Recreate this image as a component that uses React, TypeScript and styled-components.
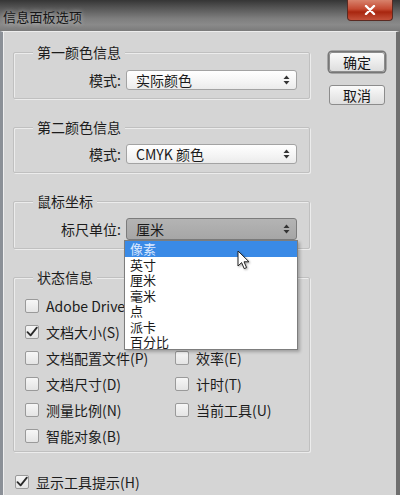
import React from "react";
import styled, { createGlobalStyle, css } from "styled-components";

const Global = createGlobalStyle`
  html, body { margin: 0; padding: 0; background: #d5d5d5; }
  body { font-family: "Noto Sans CJK SC", "Noto Sans", sans-serif; color: #1a1a1a; }
  * { box-sizing: border-box; }
`;

const Window = styled.div`
  width: 400px;
  height: 495px;
  overflow: hidden;
  display: flex;
  flex-direction: column;
  background: #d5d5d5;
`;

const TitleBar = styled.div`
  height: 31px;
  flex: none;
  display: flex;
  align-items: flex-start;
  justify-content: space-between;
  background: linear-gradient(180deg, #353535 0%, #555 25%, #7e7e7e 60%, #8a8a8a 80%, #7a7a7a 100%);
`;

const Title = styled.div`
  font-size: 13px;
  line-height: 14px;
  padding: 10px 0 0 3px;
  color: #161616;
  letter-spacing: 0.2px;
  text-shadow: 0 0 5px rgba(235, 235, 235, 0.7);
`;

const CloseButton = styled.div`
  width: 46px;
  height: 21px;
  margin-right: 7px;
  border: 1px solid #5a2a22;
  border-top: none;
  border-radius: 0 0 4px 4px;
  background: linear-gradient(180deg, #d8826c 0%, #c44a32 45%, #a8260f 60%, #c4513a 100%);
  display: flex;
  align-items: center;
  justify-content: center;
`;

const Body = styled.div`
  flex: 1;
  display: flex;
  flex-direction: column;
  border-left: 3px solid #8b9097;
  border-right: 4px solid #6f6f6f;
  border-top: 1px solid #ededed;
  box-shadow: inset 1px 0 0 #efefef;
  padding: 20px 0 0 10px;
`;

const TopArea = styled.div`
  display: flex;
  gap: 19px;
  align-items: flex-start;
`;

const LeftColumn = styled.div`
  width: 297px;
  display: flex;
  flex-direction: column;
  gap: 28px;
`;

const ButtonColumn = styled.div`
  display: flex;
  flex-direction: column;
  gap: 13px;
`;

const Button = styled.div<{ $default?: boolean }>`
  width: 56px;
  height: 20px;
  border: 1px solid #8c8c8c;
  border-radius: 3px;
  background: linear-gradient(180deg, #fafafa 0%, #ececec 50%, #dedede 100%);
  font-size: 14px;
  line-height: 18px;
  text-align: center;
  color: #161616;
  ${(p) =>
    p.$default &&
    css`
      box-shadow: 0 0 0 1.5px #777;
    `}
`;

const Group = styled.div<{ $pt: number; $pb: number; $raised?: boolean }>`
  position: relative;
  z-index: ${(p) => (p.$raised ? 3 : "auto")};
  border: 1px solid #c0c0c0;
  border-radius: 2px;
  box-shadow: inset 1px 1px 0 #ececec, 1px 1px 0 #ececec;
  padding: ${(p) => p.$pt}px 0 ${(p) => p.$pb}px 0;
`;

const Legend = styled.div`
  position: absolute;
  top: -9px;
  left: 19px;
  padding: 0 4px;
  background: #d5d5d5;
  font-size: 14px;
  line-height: 16px;
  color: #1c1c1c;
`;

const FieldRow = styled.div`
  display: flex;
  align-items: center;
  gap: 5px;
`;

const FieldLabel = styled.div`
  width: 107px;
  text-align: right;
  font-size: 14px;
  line-height: 16px;
  color: #1c1c1c;
`;

const SelectWrap = styled.div`
  position: relative;
`;

const Select = styled.div<{ $focused?: boolean; $h: number }>`
  width: 171px;
  height: ${(p) => p.$h}px;
  border: 1px solid #9a9a9a;
  border-radius: 3px;
  display: flex;
  align-items: center;
  justify-content: space-between;
  padding: 0 6px 0 9px;
  font-size: 14px;
  line-height: 16px;
  color: #1a1a1a;
  background: ${(p) =>
    p.$focused
      ? "linear-gradient(180deg, #b4b4b4 0%, #a6a6a6 100%)"
      : "linear-gradient(180deg, #ffffff 0%, #f4f4f4 60%, #ebebeb 100%)"};
  border-color: ${(p) => (p.$focused ? "#7c7c7c" : "#a3a3a3")};
`;

const Dropdown = styled.div`
  position: absolute;
  z-index: 5;
  top: 100%;
  left: -2px;
  width: 174px;
  height: 110px;
  background: #fff;
  border: 1px solid #7d7d7d;
  box-shadow: 2px 2px 3px rgba(0, 0, 0, 0.25);
`;

const Option = styled.div<{ $active?: boolean }>`
  height: 15.5px;
  font-size: 13px;
  line-height: 15.5px;
  padding-left: 5px;
  color: ${(p) => (p.$active ? "#dbe8ff" : "#1a1a1a")};
  background: ${(p) => (p.$active ? "#3a8ae6" : "transparent")};
`;

const Cursor = styled.svg`
  position: absolute;
  left: 112px;
  top: 9px;
  filter: drop-shadow(1px 1px 1px rgba(0, 0, 0, 0.35));
`;

const CheckGrid = styled.div`
  display: grid;
  grid-template-columns: 150px 1fr;
  grid-auto-rows: 26px;
  padding-left: 11px;
`;

const CheckItem = styled.div<{ $indent?: number }>`
  display: flex;
  align-items: center;
  gap: 7px;
  padding-left: ${(p) => p.$indent ?? 0}px;
  font-size: 14px;
  line-height: 16px;
  color: #1c1c1c;
  white-space: nowrap;
`;

const Box = styled.div`
  width: 14px;
  height: 14px;
  flex: none;
  border: 1px solid #9a9a9a;
  border-radius: 2px;
  background: linear-gradient(180deg, #f6f6f6 0%, #e4e4e4 100%);
  display: flex;
  align-items: center;
  justify-content: center;
`;

const BottomRow = styled.div`
  margin-top: 17px;
  height: 26px;
  display: flex;
  align-items: center;
`;

const Arrows = () => (
  <svg width="7" height="10" viewBox="0 0 7 10">
    <path d="M3.5 0.5 L6.5 4 L0.5 4 Z" fill="#333" />
    <path d="M3.5 9.5 L6.5 6 L0.5 6 Z" fill="#333" />
  </svg>
);

const Check = () => (
  <svg width="12" height="12" viewBox="0 0 12 12">
    <path d="M1.5 6.2 L4.6 9.4 L10.8 1.6" fill="none" stroke="#2a2a2a" strokeWidth="1.8" strokeLinecap="round" strokeLinejoin="round" />
  </svg>
);

const CheckBox: React.FC<{ checked?: boolean; label: string; indent?: number }> = ({ checked, label, indent }) => (
  <CheckItem $indent={indent}>
    <Box>{checked && <Check />}</Box>
    <span>{label}</span>
  </CheckItem>
);

const units = ["像素", "英寸", "厘米", "毫米", "点", "派卡", "百分比"];

export default function App() {
  return (
    <>
      <Global />
      <Window>
        <TitleBar>
          <Title>信息面板选项</Title>
          <CloseButton>
            <svg width="12" height="10" viewBox="0 0 12 10">
              <path d="M2 1 L10 9 M10 1 L2 9" stroke="#fff" strokeWidth="2.4" strokeLinecap="round" />
            </svg>
          </CloseButton>
        </TitleBar>
        <Body>
          <TopArea>
            <LeftColumn>
              <Group $pt={17} $pb={8}>
                <Legend>第一颜色信息</Legend>
                <FieldRow>
                  <FieldLabel>模式:</FieldLabel>
                  <Select $h={20}>
                    <span>实际颜色</span>
                    <Arrows />
                  </Select>
                </FieldRow>
              </Group>
              <Group $pt={16} $pb={8}>
                <Legend>第二颜色信息</Legend>
                <FieldRow>
                  <FieldLabel>模式:</FieldLabel>
                  <Select $h={20}>
                    <span>CMYK 颜色</span>
                    <Arrows />
                  </Select>
                </FieldRow>
              </Group>
              <Group $pt={16} $pb={8} $raised>
                <Legend>鼠标坐标</Legend>
                <FieldRow>
                  <FieldLabel>标尺单位:</FieldLabel>
                  <SelectWrap>
                    <Select $h={22} $focused>
                      <span>厘米</span>
                      <Arrows />
                    </Select>
                    <Dropdown>
                      {units.map((u, i) => (
                        <Option key={u} $active={i === 0}>
                          {u}
                        </Option>
                      ))}
                      <Cursor width="14" height="21" viewBox="0 0 14 21">
                        <path
                          d="M1 1 L1 16 L4.6 12.6 L7.2 18.6 L9.6 17.6 L7 11.8 L12 11.8 Z"
                          fill="#fff"
                          stroke="#222"
                          strokeWidth="1"
                          strokeLinejoin="round"
                        />
                      </Cursor>
                    </Dropdown>
                  </SelectWrap>
                </FieldRow>
              </Group>
              <Group $pt={15} $pb={2}>
                <Legend>状态信息</Legend>
                <CheckGrid>
                  <CheckBox label="Adobe Drive(V)" />
                  <div />
                  <CheckBox label="文档大小(S)" checked />
                  <div />
                  <CheckBox label="文档配置文件(P)" />
                  <CheckBox label="效率(E)" />
                  <CheckBox label="文档尺寸(D)" />
                  <CheckBox label="计时(T)" />
                  <CheckBox label="测量比例(N)" />
                  <CheckBox label="当前工具(U)" />
                  <CheckBox label="智能对象(B)" />
                </CheckGrid>
              </Group>
            </LeftColumn>
            <ButtonColumn>
              <Button $default>确定</Button>
              <Button>取消</Button>
            </ButtonColumn>
          </TopArea>
          <BottomRow>
            <CheckBox label="显示工具提示(H)" checked indent={2} />
          </BottomRow>
        </Body>
      </Window>
    </>
  );
}
